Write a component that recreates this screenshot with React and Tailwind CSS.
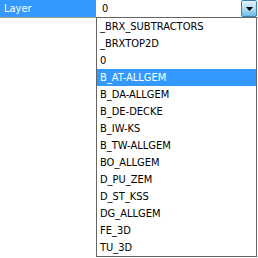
import React from "react";

const items = [
  "_BRX_SUBTRACTORS",
  "_BRXTOP2D",
  "0",
  "B_AT-ALLGEM",
  "B_DA-ALLGEM",
  "B_DE-DECKE",
  "B_IW-KS",
  "B_TW-ALLGEM",
  "BO_ALLGEM",
  "D_PU_ZEM",
  "D_ST_KSS",
  "DG_ALLGEM",
  "FE_3D",
  "TU_3D",
];

export default function App() {
  const selected = "B_AT-ALLGEM";

  return (
    <div
      className="relative w-[258px] h-[258px] bg-white overflow-hidden text-[11px] text-black font-stretch-condensed"
      style={{ fontFamily: "Tahoma, 'DejaVu Sans Condensed', 'DejaVu Sans', sans-serif" }}
    >
      {/* property row */}
      <div className="flex h-[18px] border-b border-[#a0a0a0]">
        <div className="w-[96px] bg-[#3399ff] text-white pl-[4px] leading-[17px]">Layer</div>
        <div className="flex-1 flex items-center pl-[6px] pr-[1px] bg-white">
          <span className="flex-1 leading-[17px]">0</span>
          <button className="w-[16px] h-[17px] flex items-center justify-center border border-[#3c7fb1] rounded-[2px] bg-gradient-to-b from-[#e5f4fc] via-[#b3ddf5] to-[#6dbbe8]">
            <svg width="7" height="4" viewBox="0 0 7 4">
              <path d="M0 0h7L3.5 4z" fill="#000" />
            </svg>
          </button>
        </div>
      </div>

      {/* dropdown list */}
      <div className="absolute left-[96px] top-[17px] w-[161px] border border-[#646464] bg-white">
        {items.map((it) => (
          <div
            key={it}
            className={
              "h-[17px] leading-[17px] pl-[3px] " +
              (it === selected ? "bg-[#3399ff] text-white" : "")
            }
          >
            {it}
          </div>
        ))}
      </div>
    </div>
  );
}
